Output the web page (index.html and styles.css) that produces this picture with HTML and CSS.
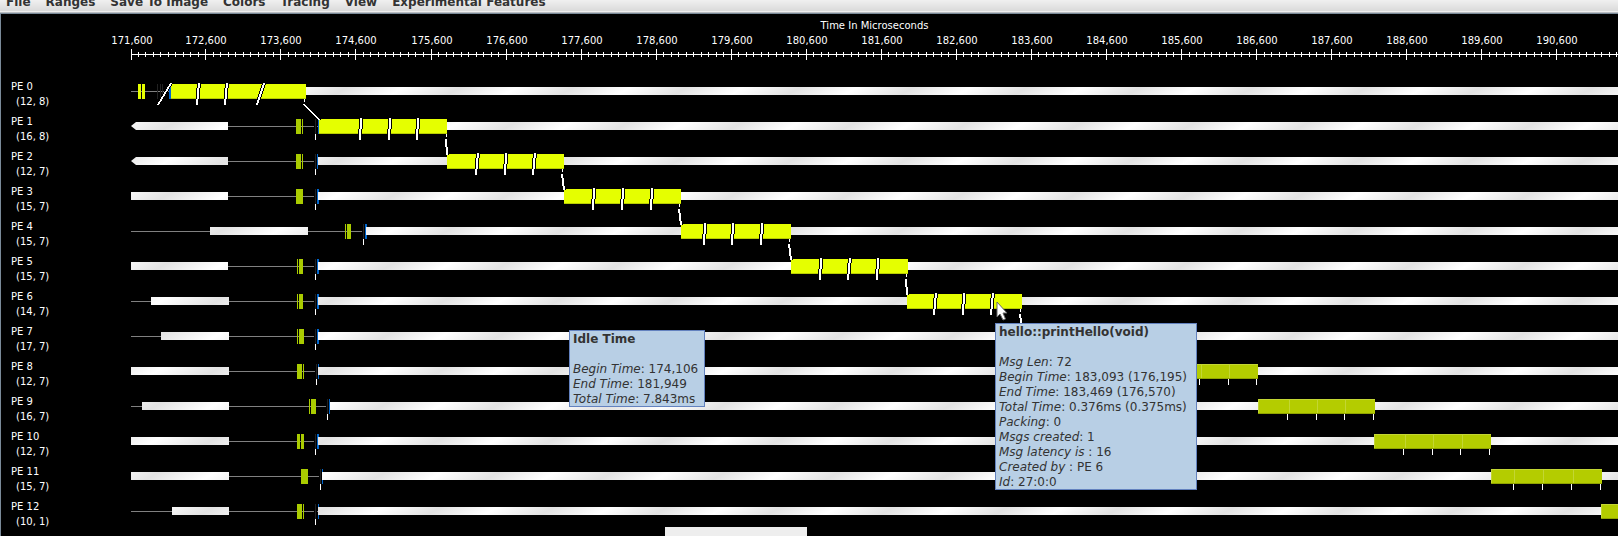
FILE: index.html
```html
<!DOCTYPE html>
<html lang="en">
<head>
<meta charset="utf-8">
<title>Timeline</title>
<link rel="stylesheet" href="styles.css">
</head>
<body>
<nav class="menubar">
  <button class="menu" type="button">File</button>
  <button class="menu" type="button">Ranges</button>
  <button class="menu" type="button">Save To Image</button>
  <button class="menu" type="button">Colors</button>
  <button class="menu" type="button">Tracing</button>
  <button class="menu" type="button">View</button>
  <button class="menu" type="button">Experimental Features</button>
</nav>
<main class="timeline">
  <header class="axis">
    <h1 class="axis-title">Time In Microseconds</h1>
    <svg class="axis-scale" id="axis" aria-label="Time axis"></svg>
  </header>
  <ul class="labels">
    <li class="pe">PE 0<span class="usage">(12, 8)</span></li>
    <li class="pe">PE 1<span class="usage">(16, 8)</span></li>
    <li class="pe">PE 2<span class="usage">(12, 7)</span></li>
    <li class="pe">PE 3<span class="usage">(15, 7)</span></li>
    <li class="pe">PE 4<span class="usage">(15, 7)</span></li>
    <li class="pe">PE 5<span class="usage">(15, 7)</span></li>
    <li class="pe">PE 6<span class="usage">(14, 7)</span></li>
    <li class="pe">PE 7<span class="usage">(17, 7)</span></li>
    <li class="pe">PE 8<span class="usage">(12, 7)</span></li>
    <li class="pe">PE 9<span class="usage">(16, 7)</span></li>
    <li class="pe">PE 10<span class="usage">(12, 7)</span></li>
    <li class="pe">PE 11<span class="usage">(15, 7)</span></li>
    <li class="pe">PE 12<span class="usage">(10, 1)</span></li>
  </ul>
  <svg class="tracks" id="tracks" aria-label="Processor timelines">
    <defs>
      <linearGradient id="idle" gradientUnits="userSpaceOnUse" x1="663" y1="12" x2="678" y2="37" spreadMethod="reflect">
        <stop offset="0" stop-color="#e3e3e3"/>
        <stop offset="1" stop-color="#ffffff"/>
      </linearGradient>
    </defs>
  </svg>
</main>
<div class="popup-edge"></div>
<section class="tip tip-idle">
  <h2 class="tip-title">Idle Time</h2>
  <p><i>Begin Time</i>: 174,106</p>
  <p><i>End Time</i>: 181,949</p>
  <p><i>Total Time</i>: 7.843ms</p>
</section>
<section class="tip tip-entry">
  <h2 class="tip-title">hello::printHello(void)</h2>
  <p><i>Msg Len</i>: 72</p>
  <p><i>Begin Time</i>: 183,093 (176,195)</p>
  <p><i>End Time</i>: 183,469 (176,570)</p>
  <p><i>Total Time</i>: 0.376ms (0.375ms)</p>
  <p><i>Packing</i>: 0</p>
  <p><i>Msgs created</i>: 1</p>
  <p><i>Msg latency is</i> : 16</p>
  <p><i>Created by</i> : PE 6</p>
  <p><i>Id</i>: 27:0:0</p>
</section>
<svg class="cursor" viewBox="0 0 12 20" aria-hidden="true">
  <path d="M1 1V16L4 13L7 19L9.500 18L7 12H11Z"/>
</svg>
<script src="timeline.js"></script>
</body>
</html>
```
FILE: styles.css
```css
* { box-sizing: border-box; }

body {
  margin: 0;
  min-height: 100vh;
  display: flex;
  flex-direction: column;
  position: relative;
  overflow: hidden;
  background: #000;
  color: #fff;
  font-family: "DejaVu Sans", sans-serif;
  font-size: 10px;
}

.menubar {
  display: flex;
  align-items: flex-end;
  height: 14px;
  padding-left: 6px;
  gap: 15px;
  overflow: hidden;
  background: linear-gradient(#f0f0f0, #dadada 11px, #eee 11px, #eee 12px, #b8bcc0 12px, #b8bcc0 13px, #7a8a99 13px);
}

.menu {
  flex: none;
  margin: 0;
  padding: 0 0 4px;
  border: 0;
  background: none;
  color: #333;
  font: bold 12px/15px "DejaVu Sans", sans-serif;
}

.timeline {
  flex: 1;
  display: grid;
  grid-template-columns: 130px 1fr;
  grid-template-rows: 65px 1fr;
  border-left: 1px solid #7a8a99;
}

.axis {
  grid-column: 2;
  padding-top: 3px;
}

.axis-title {
  margin: 0;
  font-size: 10px;
  font-weight: normal;
  line-height: 18px;
  text-align: center;
}

.axis-scale {
  display: block;
  width: 100%;
  height: 36px;
  overflow: visible;
}

.axis-scale text {
  fill: #fff;
  font-size: 10px;
  text-anchor: middle;
}

.labels {
  margin: 0;
  padding: 0 0 0 10px;
  list-style: none;
}

.pe {
  height: 35px;
  line-height: 15px;
}

.usage {
  display: block;
  padding-left: 5px;
}

.tracks {
  width: 100%;
  height: 100%;
  overflow: hidden;
}

.tip {
  position: absolute;
  padding: 1px 3px 0;
  border: 1px solid #6382bf;
  background: #b8cfe5;
  color: #333;
  font-size: 12px;
  line-height: 15px;
  white-space: nowrap;
}

.tip p { margin: 0; }

.tip p:last-child { margin-bottom: -1px; }

.tip-title {
  margin: 0 0 15px;
  font-size: 12px;
  line-height: 15px;
}

.tip-idle {
  left: 569px;
  top: 330px;
  width: 136px;
}

.tip-entry {
  left: 995px;
  top: 323px;
  width: 202px;
}

.popup-edge {
  position: absolute;
  left: 665px;
  bottom: 0;
  width: 142px;
  height: 9px;
  background: #eee;
}

.cursor {
  position: absolute;
  left: 996px;
  top: 301px;
  width: 12px;
  height: 20px;
  fill: #fff;
  stroke: #666;
}
```
FILE: timeline.js
```js
const NS = "http://www.w3.org/2000/svg";
const LEFT = 131;
const ROW = 35;
const MID = 12;
const END = 3000;

function add(parent, tag, attrs, text) {
  const node = document.createElementNS(NS, tag);
  for (const key in attrs) node.setAttribute(key, attrs[key]);
  if (text) node.textContent = text;
  parent.appendChild(node);
}

function rect(parent, x1, x2, y, height, fill) {
  add(parent, "rect", { x: x1 - LEFT, y, width: x2 - x1, height, fill });
}

/* Time axis: one label for each 1,000 microseconds, ten ticks between labels */
const axis = document.getElementById("axis");
rect(axis, LEFT, END, 19, 1, "#fff");
for (let i = 0; i <= 198; i++) {
  const x = i ? Math.round(130.3 + i * 7.505) : LEFT;
  const major = i % 10 === 0;
  rect(axis, x, x + 1, major ? 14 : 17, major ? 11 : 5, "#fff");
  if (major) add(axis, "text", { x: x - LEFT + 1, y: 9 }, (171600 + i * 100).toLocaleString("en-US"));
}

/* idle and run: [start, end]; small: short entries; mark: user event; msgs: [top, bottom] */
const rows = [
  { idle: [[306, END]], small: [], bright: [[138, 141], [142, 145]], dark: [157, 160, 162], blue: [169, 171], run: [171, 306],
    msgs: [[171, 158], [199, 197], [227, 225], [264, 257]], next: [304, 319] },
  { idle: [[131, 228], [447, END]], arrow: 1, small: [[296, 301], [302, 303]], mark: 315, blue: [318, 319], run: [319, 447],
    msgs: [[361, 360], [390, 389], [418, 417]], next: [446, 447] },
  { idle: [[131, 228], [318, END]], arrow: 1, small: [[296, 301], [302, 303]], mark: 315, blue: [317, 318], run: [447, 564],
    msgs: [[478, 476], [506, 505], [535, 533]], next: [562, 564] },
  { idle: [[131, 228], [318, END]], small: [[296, 303]], mark: 315, blue: [317, 319], run: [564, 681],
    msgs: [[594, 593], [623, 622], [652, 651]], next: [679, 681] },
  { idle: [[210, 308], [366, END]], small: [[345, 346], [347, 351]], mark: 363, blue: [365, 367], run: [681, 791],
    msgs: [[705, 704], [733, 732], [762, 761]], next: [789, 791] },
  { idle: [[131, 228], [318, END]], small: [[297, 298], [299, 303]], mark: 315, blue: [317, 319], run: [791, 908],
    msgs: [[821, 820], [850, 848], [878, 877]], next: [906, 907] },
  { idle: [[151, 229], [318, END]], small: [[297, 298], [299, 303]], mark: 315, blue: [317, 319], run: [907, 1022],
    msgs: [[936, 934], [964, 963], [993, 991]], next: [1020, 1022] },
  { idle: [[161, 229], [318, END]], small: [[297, 298], [299, 304]], mark: 315, blue: [317, 319] },
  { idle: [[131, 229], [318, END]], small: [[297, 302], [303, 304]], mark: 316, blue: [318, 319],
    dim: [1141, 1258], cuts: [1201, 1229], ticks: [1199, 1228, 1256] },
  { idle: [[142, 229], [330, END]], small: [[309, 310], [311, 316]], mark: 327, blue: [329, 330],
    dim: [1258, 1375], cuts: [1289, 1317, 1345], ticks: [1287, 1316, 1344, 1373] },
  { idle: [[131, 229], [318, END]], small: [[297, 300], [301, 304]], mark: 315, blue: [317, 319],
    dim: [1374, 1491], cuts: [1405, 1433, 1462], ticks: [1403, 1432, 1460, 1489] },
  { idle: [[131, 229], [322, END]], small: [[301, 308]], mark: 320, blue: [322, 323],
    dim: [1491, 1602], cuts: [1514, 1543, 1573], ticks: [1513, 1542, 1571, 1600] },
  { idle: [[172, 229], [318, 1601]], small: [[297, 302], [303, 304]], mark: 315, blue: [318, 319],
    dim: [1601, END], cuts: [], ticks: [] }
];

const tracks = document.getElementById("tracks");

/* A stroke whose horizontal run is `width` wide, however it leans */
function slant(x1, y1, x2, y2, fill, width) {
  const a = x1 - LEFT - width / 2;
  const b = x2 - LEFT - width / 2;
  add(tracks, "path", {
    d: `M${a} ${y1}h${width}L${b + width} ${y2}h${-width}z`, fill, "shape-rendering": "crispEdges"
  });
}

rows.forEach((row, i) => {
  const y = MID + i * ROW;
  const top = y - 7;
  rect(tracks, LEFT, row.blue[0], y, 1, "#808080");
  (row.dark || []).forEach(x => rect(tracks, x, x + 1, top, 15, "#222"));
  row.small.forEach(s => rect(tracks, s[0], s[1], top, 15, "#aacc00"));
  (row.bright || []).forEach(s => rect(tracks, s[0], s[1], top, 15, "#e5ff00"));
  if (row.mark) {
    rect(tracks, row.mark - 1, row.mark + 2, y, 1, "#000");
    rect(tracks, row.mark, row.mark + 1, top, 15, "#222");
    rect(tracks, row.mark, row.mark + 1, y + 8, 6, "#fff");
  }
  rect(tracks, row.blue[0], row.blue[1], top, 15, "#0066cc");
  row.idle.forEach(s => rect(tracks, s[0], s[1], y - 4, 8, "url(#idle)"));
  if (row.arrow) {
    add(tracks, "path", { d: `M0 ${y - 4}h5l-5 4l5 4h-5z`, fill: "#000" });
  }
  if (row.run) {
    rect(tracks, row.run[0], row.run[1], top, 15, "#e5ff00");
    rect(tracks, row.run[0], row.run[1], y + 7, 1, "#b7cc00");
  }
  if (row.dim) {
    rect(tracks, row.dim[0], row.dim[1], top, 15, "#b4cc00");
    rect(tracks, row.dim[0], row.dim[1], top, 1, "#c3d633");
    rect(tracks, row.dim[0], row.dim[0] + 1, top, 15, "#c3d633");
    rect(tracks, row.dim[0], row.dim[1], y + 7, 1, "#90a300");
    row.cuts.forEach(x => rect(tracks, x, x + 1, top, 14, "#c3d633"));
    row.ticks.forEach(x => rect(tracks, x, x + 1, y + 8, 6, "#fff"));
  }
});

/* Messages lie over every row */
rows.forEach((row, i) => {
  const y = MID + i * ROW;
  (row.msgs || []).forEach(m => {
    slant(m[0], y - 8, m[1], y + 14, "#000", 4);
    slant(m[0], y - 8, m[1], y + 14, "#fff", 2);
  });
  if (row.next) {
    rect(tracks, row.next[0], row.next[0] + 1, y + 8, 3, "#fff");
    slant(row.next[0], y + 13, row.next[1], y + 29, "#000", 4);
    slant(row.next[0], y + 13, row.next[1], y + 29, "#fff", 2);
  }
});
```
